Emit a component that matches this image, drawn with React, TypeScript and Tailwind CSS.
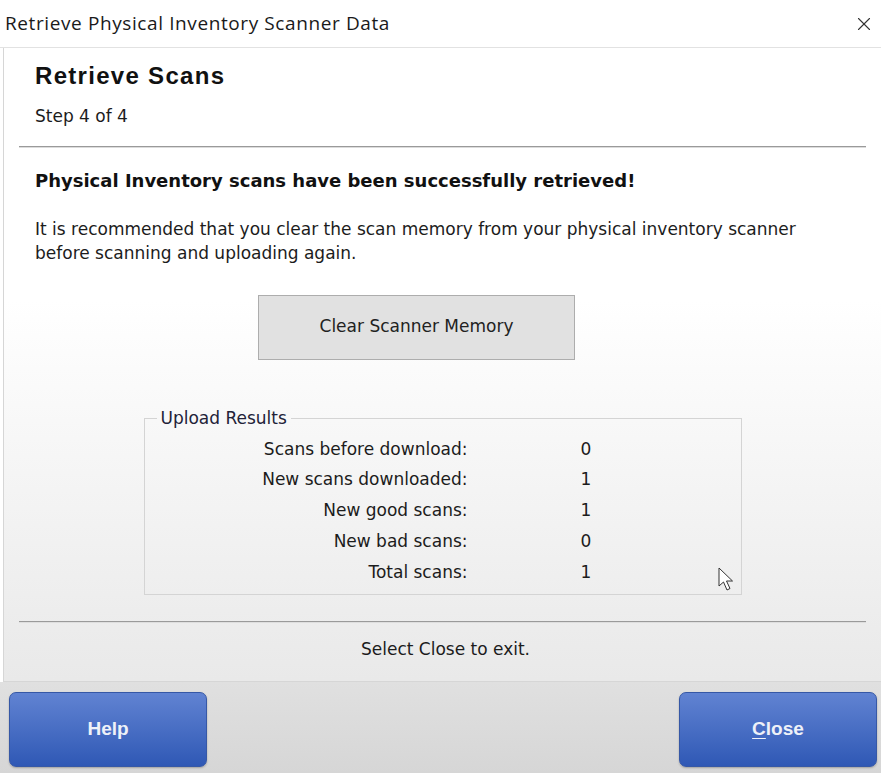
import { X } from 'lucide-react'

const results = [
  { label: 'Scans before download:', value: 0 },
  { label: 'New scans downloaded:', value: 1 },
  { label: 'New good scans:', value: 1 },
  { label: 'New bad scans:', value: 0 },
  { label: 'Total scans:', value: 1 },
]

function Cursor() {
  return (
    <svg width="18" height="26" viewBox="0 0 18 26" className="absolute left-[718px] top-[567px]">
      <path d="M1 1 L1 19 L5.5 15 L9 23 L12 21.5 L8.5 14 L14.5 14 Z" fill="white" stroke="#333" strokeWidth="1" />
    </svg>
  )
}

function BlueButton({ children }: { children: React.ReactNode }) {
  return (
    <button className="flex h-[75px] w-[198px] items-center justify-center rounded-[7px] border border-[#3658a6] bg-gradient-to-b from-[#6183d2] to-[#2f58b5] font-['Liberation_Sans',Arial,sans-serif] text-[19px] font-bold text-[#eef1f8] shadow-[0_1px_2px_rgba(0,0,0,0.25)]">
      {children}
    </button>
  )
}

export default function App() {
  return (
    <div className="relative flex h-[773px] w-[881px] flex-col overflow-hidden bg-white font-['DejaVu_Sans',Verdana,sans-serif] text-[#1c1c1c]">
      {/* title bar */}
      <div className="flex h-[48px] shrink-0 items-center justify-between border-b border-[#e2e2e2] pl-[5px] pr-[6px]">
        <span className="font-['Open_Sans',sans-serif] text-[19px] tracking-[0.6px] text-[#1a1a1a]">Retrieve Physical Inventory Scanner Data</span>
        <X size={22} strokeWidth={1.2} className="text-[#333]" />
      </div>

      {/* wizard page */}
      <div className="ml-[3px] flex h-[634px] shrink-0 flex-col border-b border-l border-[#d6d6d6] bg-gradient-to-b from-white from-40% to-[#e9e9e9]">
        <div className="px-[31px] pt-[10px]">
          <div className="font-['Liberation_Sans',Arial,sans-serif] text-[24px] font-bold tracking-[1.3px] text-[#111]">Retrieve Scans</div>
          <div className="mt-[10px] text-[17px]">Step 4 of 4</div>
        </div>
        <div className="mx-[15px] mt-[16px] h-[2px] border-t border-[#9a9a9a] bg-[#dcdcdc]" />

        <div className="px-[31px] pt-[19px]">
          <div className="text-[18px] font-bold text-[#111]">Physical Inventory scans have been successfully retrieved!</div>
          <p className="mt-[23px] text-[17px] leading-[24px]">
            It is recommended that you clear the scan memory from your physical inventory scanner
            <br />
            before scanning and uploading again.
          </p>
        </div>

        <div className="mt-[30px] flex pl-[254px]">
          <button className="h-[65px] w-[317px] border border-[#adadad] bg-[#e1e1e1] text-[17px] text-[#222]">
            Clear Scanner Memory
          </button>
        </div>

        {/* upload results group box */}
        <fieldset className="mx-auto mt-[46px] w-[598px] border border-[#d4d4d4] px-0 pb-[6px] pt-[3px]">
          <legend className="ml-[12px] px-[4px] text-[17px] text-[#222238]">Upload Results</legend>
          <div className="flex flex-col">
            {results.map((r) => (
              <div key={r.label} className="flex h-[30.75px] items-center text-[17px]">
                <span className="w-[323px] text-right">{r.label}</span>
                <span className="w-[237px] text-center">{r.value}</span>
              </div>
            ))}
          </div>
        </fieldset>

        <div className="mx-[15px] mt-[26px] h-[2px] border-t border-[#9a9a9a] bg-[#dedede]" />
        <div className="mt-[14px] pl-[6px] text-center text-[17px]">Select Close to exit.</div>
      </div>

      {/* footer buttons */}
      <div className="flex flex-1 items-start justify-between bg-gradient-to-b from-[#e0e0e0] to-[#d6d6d6] pl-[9px] pr-[4px] pt-[10px]">
        <BlueButton>Help</BlueButton>
        <BlueButton>
          <span>
            <span className="underline underline-offset-[3px]">C</span>lose
          </span>
        </BlueButton>
      </div>

      <Cursor />
    </div>
  )
}
